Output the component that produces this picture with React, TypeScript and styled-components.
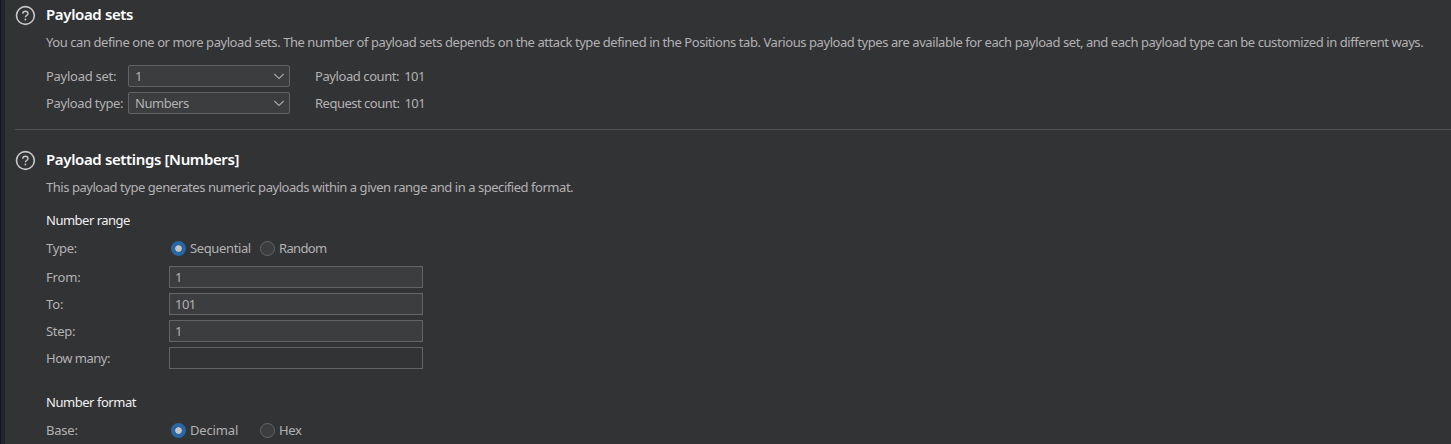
import React from "react";
import styled, { createGlobalStyle } from "styled-components";

const GlobalStyle = createGlobalStyle`
  * { box-sizing: border-box; }
  html, body { margin: 0; padding: 0; background: #323335; overflow: hidden; }
  body { font-family: "Noto Sans", sans-serif; font-size: 13px; color: #b2b2b3; }
`;

const Window = styled.main`
  display: flex;
  width: 1451px;
  height: 444px;
  overflow: hidden;
  background: #323335;
`;

const Edge = styled.div`
  flex: none;
  width: 5px;
  border-left: 1px solid #15161b;
  background: #23252e;
`;

const Panel = styled.div`
  flex: 1;
  min-width: 0;
  padding-left: 10px;
`;

const Section = styled.section<{ $top: number }>`
  display: grid;
  grid-template-columns: 31px 1fr;
  padding-top: ${(p) => p.$top}px;
`;

const IconCell = styled.div`
  line-height: 0;
`;

const Body = styled.div`
  min-width: 0;
`;

const Title = styled.h2`
  margin: 0;
  height: 20px;
  line-height: 18px;
  font-size: 15px;
  font-weight: 600;
  color: #fff;
  white-space: nowrap;
`;

const Text = styled.span<{ $track?: number }>`
  display: inline-block;
  white-space: nowrap;
  letter-spacing: ${(p) => p.$track ?? -0.46}px;
`;

const Description = styled.p`
  margin: 7px 0 0;
  height: 20px;
  line-height: 20px;
  white-space: nowrap;
`;

const SetsGrid = styled.div`
  display: grid;
  grid-template-columns: 82px 162px auto;
  grid-auto-rows: 22px;
  row-gap: 5px;
  margin-top: 13px;
  line-height: 22px;
`;

const Select = styled.div`
  display: flex;
  align-items: center;
  justify-content: space-between;
  height: 22px;
  padding: 0 4px 0 6px;
  border: 1px solid #616365;
  border-radius: 2px;
  background: #3c3d3f;
  line-height: 20px;
`;

const Count = styled.div`
  display: flex;
  gap: 5px;
  padding-left: 25px;
`;

const Divider = styled.hr`
  height: 1px;
  margin: 15px 0 0;
  border: 0;
  background: #525355;
`;

const Subheading = styled.h3<{ $top: number }>`
  margin: ${(p) => p.$top}px 0 0;
  height: 20px;
  line-height: 20px;
  font-size: 13px;
  font-weight: 400;
  color: #f0f0f0;
`;

const RadioRow = styled.div`
  display: grid;
  grid-template-columns: 125px 89px auto;
  height: 20px;
  margin-top: 8px;
  line-height: 20px;
`;

const RadioLabel = styled.div`
  display: flex;
  align-items: center;
  gap: 4px;
`;

const Dot = styled.span<{ $on?: boolean }>`
  flex: none;
  width: 15px;
  height: 15px;
  margin-top: 1px;
  border-radius: 50%;
  border: ${(p) => (p.$on ? "4px solid #2767a6" : "1px solid #646567")};
  background: ${(p) => (p.$on ? "#c3c4c5" : "#3c3d3f")};
  background-clip: ${(p) => (p.$on ? "padding-box" : "border-box")};
`;

const Fields = styled.div`
  display: grid;
  grid-template-columns: 123px 254px;
  grid-auto-rows: 22px;
  row-gap: 5px;
  margin-top: 8px;
  line-height: 22px;
`;

const Field = styled.div<{ $empty?: boolean }>`
  height: 22px;
  padding-left: 5px;
  border: 1px solid #616365;
  background: ${(p) => (p.$empty ? "#323335" : "#3c3d3f")};
  line-height: 20px;
`;

const HelpIcon = () => (
  <svg width="21" height="21" viewBox="0 0 21 21" fill="none" stroke="#c6c7c8">
    <circle cx="10.4" cy="10.5" r="8.9" strokeWidth="1.6" />
    <path d="M7.8 8.7C7.8 7.2 8.9 6.3 10.4 6.3s2.6.9 2.6 2.3c0 1.2-.8 1.7-1.5 2.1-.8.4-1.1.7-1.1 1.6" strokeWidth="1.4" />
    <circle cx="10.4" cy="14.5" r=".9" fill="#c6c7c8" stroke="none" />
  </svg>
);

const Chevron = () => (
  <svg width="12" height="8" viewBox="0 0 12 8" fill="none" stroke="#a4a5a6" strokeWidth="1.1">
    <path d="M1.3 2 6 6.4l4.7-4.4" />
  </svg>
);

const fields = [
  { label: "From:", value: "1", track: -0.15 },
  { label: "To:", value: "101", track: -0.15 },
  { label: "Step:", value: "1", track: -0.3 },
  { label: "How many:", value: "", track: -0.5 },
];

export default function App() {
  return (
    <Window>
      <GlobalStyle />
      <Edge />
      <Panel>
        <Section $top={5}>
          <IconCell><HelpIcon /></IconCell>
          <Body>
            <Title><Text $track={-0.36}>Payload sets</Text></Title>
            <Description>
              <Text $track={-0.437}>You can define one or more payload sets. The number of payload sets depends on the attack type defined in the Positions tab. Various payload types are available for each payload set, and each payload type can be customized in different ways.</Text>
            </Description>
            <SetsGrid>
              <Text $track={-0.27}>Payload set:</Text>
              <Select><Text>1</Text><Chevron /></Select>
              <Count><Text $track={-0.42}>Payload count:</Text><Text $track={-0.5}>101</Text></Count>
              <Text $track={-0.36}>Payload type:</Text>
              <Select><Text>Numbers</Text><Chevron /></Select>
              <Count><Text $track={-0.5}>Request count:</Text><Text $track={-0.5}>101</Text></Count>
            </SetsGrid>
          </Body>
        </Section>
        <Divider />
        <Section $top={20}>
          <IconCell><HelpIcon /></IconCell>
          <Body>
            <Title><Text $track={-0.36}>Payload settings [Numbers]</Text></Title>
            <Description>
              <Text>This payload type generates numeric payloads within a given range and in a specified format.</Text>
            </Description>
            <Subheading $top={13}><Text $track={-0.5}>Number range</Text></Subheading>
            <RadioRow>
              <Text $track={-0.3}>Type:</Text>
              <RadioLabel><Dot $on /><Text $track={-0.37}>Sequential</Text></RadioLabel>
              <RadioLabel><Dot /><Text $track={-0.65}>Random</Text></RadioLabel>
            </RadioRow>
            <Fields>
              {fields.map((f) => (
                <React.Fragment key={f.label}>
                  <Text $track={f.track}>{f.label}</Text>
                  <Field $empty={!f.value}><Text $track={-0.5}>{f.value}</Text></Field>
                </React.Fragment>
              ))}
            </Fields>
            <Subheading $top={23}><Text>Number format</Text></Subheading>
            <RadioRow>
              <Text $track={-0.2}>Base:</Text>
              <RadioLabel><Dot $on /><Text $track={-0.15}>Decimal</Text></RadioLabel>
              <RadioLabel><Dot /><Text $track={-0.4}>Hex</Text></RadioLabel>
            </RadioRow>
          </Body>
        </Section>
      </Panel>
    </Window>
  );
}
